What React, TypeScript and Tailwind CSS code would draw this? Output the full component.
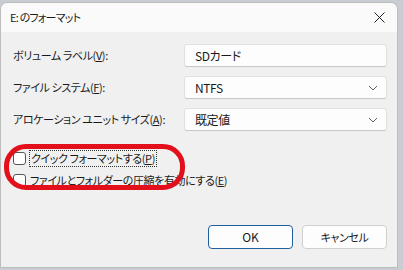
import React from 'react';

const font = { fontFamily: '"Noto Sans CJK JP", "Noto Sans", sans-serif' };

const Chevron = () => (
    <svg width="10" height="6" viewBox="0 0 10 6" className="text-[#606060]">
        <path d="M1 1 L5 5 L9 1" fill="none" stroke="currentColor" strokeWidth="1" />
    </svg>
);

const Field = ({ children, select }: { children: React.ReactNode; select?: boolean }) => (
    <div className="flex h-[23px] w-[203px] items-center justify-between rounded-[3px] border border-[#e0e0e0] border-b-[#c8c8c8] bg-[#fdfdfd] pl-[10px] pr-[8px] text-[12px] text-[#1a1a1a]">
        <span>{children}</span>
        {select && <Chevron />}
    </div>
);

const Checkbox = () => <span className="inline-block h-[13px] w-[13px] shrink-0 rounded-[3px] border border-[#555] bg-white" />;

const App = () => {
    return (
        <div className="h-[270px] w-[403px] overflow-hidden bg-[#c9ccd3] [font-feature-settings:'palt']" style={font}>
            <div className="relative mt-[2px] h-[266px] w-[398px] rounded-t-[7px] border border-[#bdbdbd] bg-[#f0f0f0]">
                {/* Title bar */}
                <div className="flex h-[29px] items-center justify-between rounded-t-[7px] bg-[#fafafa] pl-[9px] pr-[12px]">
                    <span className="text-[11px] tracking-[-0.8px] text-[#1a1a1a]">E: のフォーマット</span>
                    <svg width="11" height="11" viewBox="0 0 11 11">
                        <path d="M0.5 0.5 L10.5 10.5 M10.5 0.5 L0.5 10.5" stroke="#222" strokeWidth="1" />
                    </svg>
                </div>

                {/* Rows */}
                <div className="flex flex-col gap-[9px] pl-[12px] pr-[10px] pt-[12px] text-[11px] tracking-[-0.4px] text-[#1a1a1a]">
                    <div className="flex items-center justify-between">
                        <span className="whitespace-nowrap">ボリューム ラベル(<u>V</u>):</span>
                        <Field>SDカード</Field>
                    </div>
                    <div className="flex items-center justify-between">
                        <span className="whitespace-nowrap">ファイル システム(<u>F</u>):</span>
                        <Field select>NTFS</Field>
                    </div>
                    <div className="flex items-center justify-between">
                        <span className="whitespace-nowrap">アロケーション ユニット サイズ(<u>A</u>):</span>
                        <Field select>既定値</Field>
                    </div>
                </div>

                <div className="mt-[19px] flex flex-col gap-[6px] pl-[12px] text-[11px] tracking-[-0.4px] text-[#1a1a1a]">
                    <div className="flex items-center gap-[3px]">
                        <Checkbox />
                        <span className="whitespace-nowrap border border-dotted border-[#333] px-[1px] leading-[15px]">クイック フォーマットする(<u>P</u>)</span>
                    </div>
                    <div className="flex items-center gap-[4px]">
                        <Checkbox />
                        <span className="whitespace-nowrap leading-[15px]">ファイルとフォルダーの圧縮を有効にする(<u>E</u>)</span>
                    </div>
                </div>

                {/* Buttons */}
                <div className="mt-[37px] flex justify-end gap-[9px] pr-[10px] text-[12px] text-[#1a1a1a]">
                    <button className="h-[24px] w-[85px] rounded-[4px] border border-[#1f5f9e] bg-[#fdfdfd]">OK</button>
                    <button className="h-[24px] w-[85px] rounded-[4px] border border-[#d0d0d0] bg-[#fdfdfd] text-[11px] tracking-[-0.4px]">キャンセル</button>
                </div>

                {/* Red highlight */}
                <div className="absolute left-[3px] top-[141px] h-[46px] w-[181px] rounded-[22px] border-[5px] border-[#e3101c]" />
            </div>
        </div>
    );
};

export default App;
